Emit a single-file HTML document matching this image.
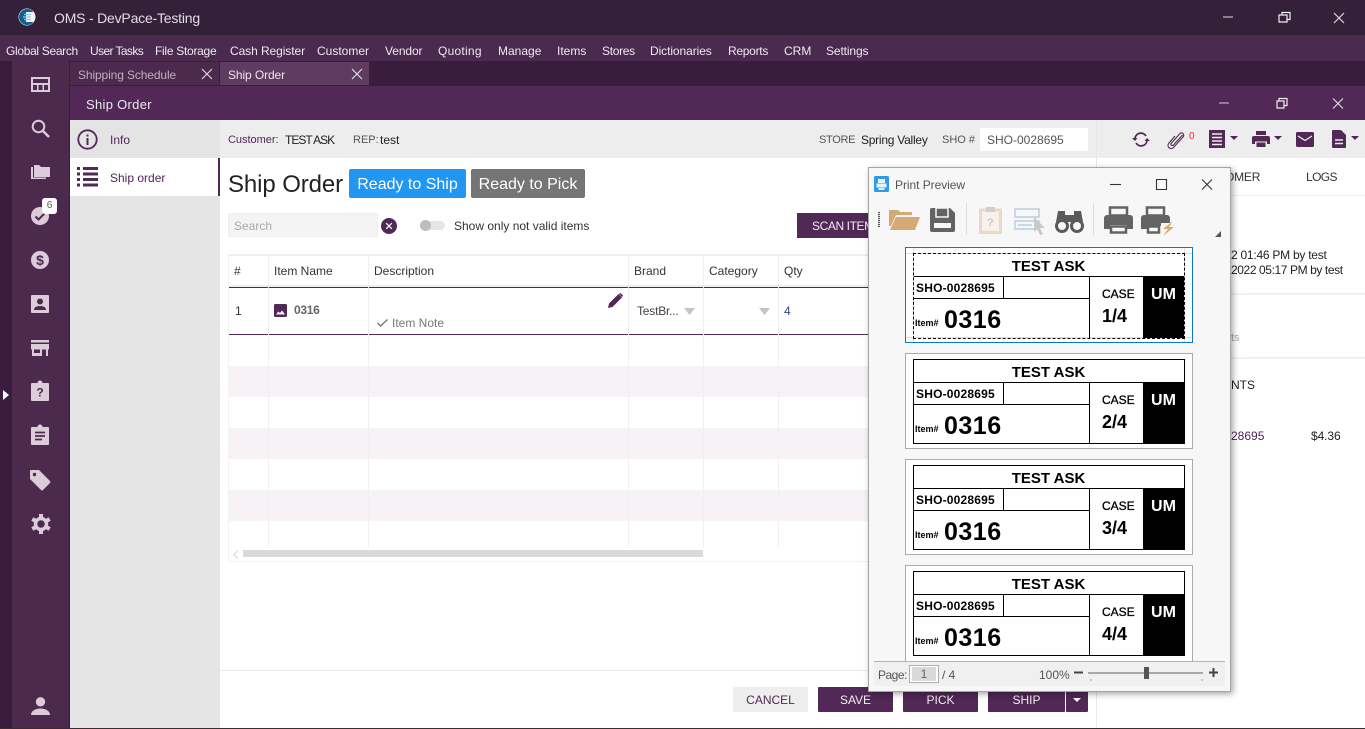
<!DOCTYPE html>
<html><head><meta charset="utf-8"><style>
html,body{margin:0;padding:0;width:1365px;height:729px;overflow:hidden;background:#fff}
body{font-family:"Liberation Sans",sans-serif;font-size:12px;color:#222;position:relative}
.b,.t{position:absolute}
.t{white-space:nowrap;line-height:16px}
svg{position:absolute;overflow:visible}
.m{top:43px;color:#f1e9f2;font-size:12px}
.th{top:263px;color:#333;font-size:12px}
.vl{position:absolute;top:255px;height:292px;width:1px;background:#f1eff2}
.ic{fill:#dccbd9}
.btn{position:absolute;top:687px;height:25px;background:#512856;color:#f3edf4;text-align:center;line-height:27px;font-size:12px;border-radius:1px}
.card{position:absolute;left:905px;width:288px;background:#fff;border:1px solid #ababab;box-sizing:border-box;height:96px}
.lb{position:absolute;left:7px;top:5px;width:272px;height:85px;border:1px solid #000;box-sizing:border-box;color:#000;font-weight:bold}
.lb div{position:absolute;white-space:nowrap}
.ln{background:#000}
</style></head><body>

<!-- title bar -->
<div class="b" style="left:0;top:0;width:1365px;height:35px;background:#35203a"></div>
<div class="b" style="left:0;top:35px;width:1365px;height:26px;background:#4a2a4e"></div>
<div class="b" style="left:0;top:61px;width:1365px;height:25px;background:#3a1c3e"></div>
<svg style="left:18px;top:8px" width="18" height="18" viewBox="0 0 18 18"><circle cx="9" cy="9" r="8.500" fill="#f4f4f4"/><path d="M9 1A8 8 0 0 0 9 17c3 0 5-1 6-3H8V4h7C14 2 12 1 9 1Z" fill="#0f5f97"/><path d="M6 6.500h7M5 9h8M6 11.500h7" stroke="#8fc3e4" stroke-width="1.200"/></svg>
<div class="t" style="left:54px;top:10px;color:#e3dbe5;font-size:14px;letter-spacing:-.2px">OMS - DevPace-Testing</div>
<svg style="left:1223px;top:10px" width="130" height="16" fill="none" stroke="#cfc8d1"><path d="M0 7h10" stroke="#a89fac" stroke-width="1.500"/><path d="M56 5h8v7h-8zM59 5V2.500h8v7h-3" stroke="#eee" stroke-width="1.200"/><path d="M111 3l10 10M121 3l-10 10" stroke="#ddd" stroke-width="1.200"/></svg>

<!-- menu -->
<div class="t m" style="left:6px;letter-spacing:-.32px">Global Search</div>
<div class="t m" style="left:90px;letter-spacing:-.6px">User Tasks</div>
<div class="t m" style="left:155px;letter-spacing:-.28px">File Storage</div>
<div class="t m" style="left:230px;letter-spacing:-.08px">Cash Register</div>
<div class="t m" style="left:317px">Customer</div>
<div class="t m" style="left:385px;letter-spacing:-.1px">Vendor</div>
<div class="t m" style="left:438px;letter-spacing:.25px">Quoting</div>
<div class="t m" style="left:498px">Manage</div>
<div class="t m" style="left:557px">Items</div>
<div class="t m" style="left:602px;letter-spacing:-.3px">Stores</div>
<div class="t m" style="left:650px;letter-spacing:-.08px">Dictionaries</div>
<div class="t m" style="left:728px;letter-spacing:-.28px">Reports</div>
<div class="t m" style="left:784px">CRM</div>
<div class="t m" style="left:826px;letter-spacing:-.12px">Settings</div>

<!-- sidebars -->
<div class="b" style="left:0;top:61px;width:12px;height:667px;background:#3a1c3e"></div>
<div class="b" style="left:12px;top:61px;width:58px;height:667px;background:#4b2a4d"></div>
<div class="b" style="left:69px;top:61px;width:1px;height:667px;background:#3a1c3e"></div>
<svg style="left:3px;top:390px" width="6" height="10"><path d="M0 0l6 5-6 5z" fill="#fff"/></svg>

<svg style="left:31px;top:77px" width="19" height="15"><path d="M0 0h19v15H0zM2 2v4h15V2zM2 8v5h4V8zM7.500 8v5h4V8zM13 8v5h4V8z" class="ic" fill-rule="evenodd"/></svg>
<svg style="left:31px;top:119px" width="19" height="19" fill="none" stroke="#dccbd9" stroke-width="2"><circle cx="7.500" cy="7.500" r="5.800"/><path d="M12 12l6 6" stroke-width="2.400"/></svg>
<svg style="left:31px;top:165px" width="19" height="14"><path d="M0 2v12h15v-1.500H2V2z" class="ic"/><path d="M3 0h5l2 2h9v10H3z" class="ic"/></svg>
<svg style="left:31px;top:207px" width="18" height="18"><circle cx="9" cy="9" r="9" class="ic"/><path d="M4.500 9.500l3 3 6-6" fill="none" stroke="#4b2a4d" stroke-width="2"/></svg>
<div class="b" style="left:42px;top:198px;width:15px;height:16px;background:#fff;border-radius:3px;color:#555;font-size:10px;text-align:center;line-height:16px">6</div>
<svg style="left:31px;top:251px" width="18" height="18"><circle cx="9" cy="9" r="9" class="ic"/><text x="9" y="14" text-anchor="middle" font-family="Liberation Sans" font-size="14" font-weight="bold" fill="#4b2a4d">$</text></svg>
<svg style="left:31px;top:295px" width="18" height="18"><path d="M1 0h16a1 1 0 0 1 1 1v16a1 1 0 0 1-1 1H1a1 1 0 0 1-1-1V1a1 1 0 0 1 1-1z" class="ic"/><circle cx="9" cy="6.500" r="3" fill="#4b2a4d"/><path d="M3 15c0-3 3-4 6-4s6 1 6 4z" fill="#4b2a4d"/></svg>
<svg style="left:31px;top:340px" width="18" height="17"><path d="M0 0h18v2.500H0zM0 4h18l.0 5.500H17V16h-2V9.500h-4V16H1V9.500H0zM3 9.500V13h6V9.500z" class="ic" fill-rule="evenodd"/></svg>
<svg style="left:31px;top:381px" width="18" height="20"><path d="M1 2h5.500a2.500 2.500 0 0 1 5 0H17a1 1 0 0 1 1 1v16a1 1 0 0 1-1 1H1a1 1 0 0 1-1-1V3a1 1 0 0 1 1-1z" class="ic"/><text x="9" y="15.500" text-anchor="middle" font-family="Liberation Sans" font-size="12" font-weight="bold" fill="#4b2a4d">?</text></svg>
<svg style="left:31px;top:425px" width="18" height="20"><path d="M1 2h5.500a2.500 2.500 0 0 1 5 0H17a1 1 0 0 1 1 1v16a1 1 0 0 1-1 1H1a1 1 0 0 1-1-1V3a1 1 0 0 1 1-1z" class="ic"/><path d="M4 7.500h10M4 11h10M4 14.500h7" stroke="#4b2a4d" stroke-width="1.700"/></svg>
<svg style="left:30px;top:470px" width="21" height="21"><path d="M1 0h8l11 11a1.500 1.500 0 0 1 0 2l-7 7a1.500 1.500 0 0 1-2 0L0 9V1a1 1 0 0 1 1-1z" class="ic"/><circle cx="4.500" cy="4.500" r="1.700" fill="#4b2a4d"/></svg>
<svg style="left:31px;top:514px" width="20" height="20" viewBox="0 0 20 20"><circle cx="10" cy="10" r="5.500" fill="none" stroke="#dccbd9" stroke-width="3.500"/><path d="M10 0v4M10 16v4M1.300 5l3.500 2M15.200 13l3.500 2M18.700 5l-3.500 2M4.800 13l-3.500 2" stroke="#dccbd9" stroke-width="4"/></svg>
<svg style="left:31px;top:697px" width="19" height="19"><circle cx="9.500" cy="4.800" r="4.700" class="ic"/><path d="M0 18c0-4.500 5-6.500 9.500-6.500S19 13.500 19 18z" class="ic"/></svg>

<!-- tabs -->
<div class="b" style="left:70px;top:62px;width:149px;height:23px;background:#4b2a4d"></div>
<div class="t" style="left:78px;top:67px;color:#bfb0c2;font-size:12px;letter-spacing:-.12px">Shipping Schedule</div>
<svg style="left:202px;top:69px" width="10" height="10"><path d="M0 0l10 10M10 0L0 10" stroke="#e3dbe5" stroke-width="1.100"/></svg>
<div class="b" style="left:220px;top:62px;width:149px;height:23px;background:#5e3c61"></div>
<div class="t" style="left:228px;top:67px;color:#eee6ef;font-size:12px;letter-spacing:-.1px">Ship Order</div>
<svg style="left:352px;top:69px" width="10" height="10"><path d="M0 0l10 10M10 0L0 10" stroke="#e9e3ea" stroke-width="1.100"/></svg>

<!-- ship order header -->
<div class="b" style="left:70px;top:86px;width:1295px;height:34px;background:#512856"></div>
<div class="t" style="left:86px;top:97px;color:#efe7f0;font-size:13px;letter-spacing:.3px">Ship Order</div>
<svg style="left:1219px;top:96px" width="130" height="16" fill="none"><path d="M0 7h10" stroke="#a994ad" stroke-width="1.500"/><path d="M58 5h7v7h-7zM60 5V2.500h8v7h-3" stroke="#eee" stroke-width="1.200"/><path d="M114 2.500l10 10M124 2.500l-10 10" stroke="#ddd" stroke-width="1.200"/></svg>

<!-- left panel -->
<div class="b" style="left:70px;top:120px;width:150px;height:608px;background:#e4e4e4"></div>
<div class="b" style="left:70px;top:158px;width:150px;height:38px;background:#fff"></div>
<div class="b" style="left:218px;top:158px;width:2px;height:38px;background:#512856"></div>
<svg style="left:77px;top:129px" width="21" height="21"><circle cx="10.500" cy="10.500" r="9.200" fill="none" stroke="#512856" stroke-width="1.800"/><path d="M9.500 9h2v7h-2zM9.500 5.500h2v2h-2z" fill="#512856"/></svg>
<svg style="left:77px;top:167px" width="21" height="20" fill="#512856"><path d="M0 0h3v3H0zM6 0h15v3H6zM0 5.500h3v3H0zM6 5.500h15v3H6zM0 11h3v3H0zM6 11h15v3H6zM0 16.500h3v3H0zM6 16.500h15v3H6z"/></svg>
<div class="t" style="left:110px;top:132px;color:#512856;font-size:12px">Info</div>
<div class="t" style="left:110px;top:170px;color:#512856;font-size:12px">Ship order</div>

<!-- info bar -->
<div class="b" style="left:220px;top:120px;width:877px;height:38px;background:#ededed"></div>
<div class="b" style="left:1097px;top:120px;width:268px;height:38px;background:#ededed"></div>
<div class="b" style="left:1096px;top:120px;width:1px;height:608px;background:#e8e8e8"></div>
<div class="t" style="left:228px;top:132px;color:#512856;font-size:11px;letter-spacing:-.02px">Customer:</div>
<div class="t" style="left:285px;top:132px;color:#222;font-size:12px;letter-spacing:-1px">TEST ASK</div>
<div class="t" style="left:353px;top:132px;color:#555;font-size:11px">REP:</div>
<div class="t" style="left:380px;top:132px;color:#222;font-size:12px">test</div>
<div class="t" style="left:819px;top:132px;color:#555;font-size:11px;letter-spacing:-.3px">STORE</div>
<div class="t" style="left:861px;top:132px;color:#222;font-size:12px;letter-spacing:-.25px">Spring Valley</div>
<div class="t" style="left:942px;top:132px;color:#555;font-size:11px">SHO #</div>
<div class="b" style="left:980px;top:128px;width:108px;height:23px;background:#fff"></div>
<div class="t" style="left:987px;top:132px;color:#555;font-size:12px">SHO-0028695</div>

<!-- right icons -->
<svg style="left:1132px;top:131px" width="18" height="17" fill="none" stroke="#512856" stroke-width="1.700"><path d="M3 7a6 6 0 0 1 11-2M15 10a6 6 0 0 1-11 2"/><path d="M0 7h5.500L3 10zM18 10h-5.500L15 7z" fill="#512856" stroke="none"/></svg>
<svg style="left:1167px;top:131px" width="17" height="18" fill="none" stroke="#512856" stroke-width="1.100"><path d="M15.500 4L6.500 14c-1.500 1.500-3.500-.5-2-2l8.500-9.500c2-2 5 1 3 3.500L6.500 16.500c-3 3-7.500-1-4.500-4.500L8 5"/></svg>
<div class="t" style="left:1189px;top:130px;color:#f22;font-size:10px;line-height:14px">0</div>
<svg style="left:1209px;top:130px" width="16" height="18" fill="#512856"><path d="M0 0h16v18H0z"/><path d="M3 4h10M3 7.500h10M3 11h10M3 14.500h10" stroke="#ededed" stroke-width="1.500"/></svg>
<svg style="left:1230px;top:136px" width="8" height="4"><path d="M0 0h8L4 4z" fill="#512856"/></svg>
<svg style="left:1252px;top:131px" width="18" height="16" fill="#512856"><path d="M4 0h10v4H4zM2 5h14a2 2 0 0 1 2 2v6h-3v-2.500H3V13H0V7a2 2 0 0 1 2-2zM4.500 11.500h9V16h-9z"/></svg>
<svg style="left:1274px;top:136px" width="8" height="4"><path d="M0 0h8L4 4z" fill="#512856"/></svg>
<svg style="left:1296px;top:132px" width="18" height="15"><path d="M1.500 0h15A1.500 1.500 0 0 1 18 1.500v12a1.500 1.500 0 0 1-1.500 1.500h-15A1.500 1.500 0 0 1 0 13.500v-12A1.500 1.500 0 0 1 1.500 0z" fill="#512856"/><path d="M2 4l7 4.500L16 4" fill="none" stroke="#ededed" stroke-width="1.300"/></svg>
<svg style="left:1332px;top:130px" width="14" height="18"><path d="M1 0h8l5 5v12a1 1 0 0 1-1 1H1a1 1 0 0 1-1-1V1a1 1 0 0 1 1-1z" fill="#512856"/><path d="M3 10h8M3 13.500h8" stroke="#ededed" stroke-width="1.500"/></svg>
<svg style="left:1351px;top:136px" width="8" height="4"><path d="M0 0h8L4 4z" fill="#512856"/></svg>

<!-- right panel -->
<div class="t" style="left:1225px;top:169px;color:#333;font-size:12px;letter-spacing:-.2px">OMER</div>
<div class="t" style="left:1306px;top:169px;color:#333;font-size:12px;letter-spacing:-.6px">LOGS</div>
<div class="b" style="left:1097px;top:195px;width:268px;height:1px;background:#eee"></div>
<div class="t" style="left:1231px;top:247px;color:#222;font-size:12px;letter-spacing:-.25px">2 01:46 PM by test</div>
<div class="t" style="left:1231px;top:262px;color:#222;font-size:12px;letter-spacing:-.4px">2022 05:17 PM by test</div>
<div class="b" style="left:1097px;top:293px;width:268px;height:2px;background:#f0f0f0"></div>
<div class="t" style="left:1231px;top:330px;color:#aaa;font-size:11px">ts</div>
<div class="b" style="left:1097px;top:357px;width:268px;height:2px;background:#f0f0f0"></div>
<div class="t" style="left:1231px;top:377px;color:#222;font-size:12px">NTS</div>
<div class="t" style="left:1231px;top:428px;color:#512856;font-size:12px">28695</div>
<div class="t" style="left:1311px;top:428px;color:#222;font-size:12px;letter-spacing:-.1px">$4.36</div>

<!-- heading -->
<div class="t" style="left:228px;top:170px;font-size:24px;line-height:30px;color:#222;letter-spacing:-.1px">Ship Order</div>
<div class="b" style="left:349px;top:169px;width:117px;height:29px;background:#2196f3;border-radius:2px;color:#fff;font-size:16px;line-height:31px;text-align:center">Ready to Ship</div>
<div class="b" style="left:471px;top:169px;width:114px;height:29px;background:#757575;border-radius:2px;color:#fff;font-size:16px;line-height:31px;text-align:center">Ready to Pick</div>

<!-- search -->
<div class="b" style="left:228px;top:213px;width:150px;height:24px;background:#f4f4f4;border:1px solid #eee;box-sizing:border-box;border-radius:2px"></div>
<div class="t" style="left:234px;top:218px;color:#a8a8a8;font-size:12px">Search</div>
<svg style="left:381px;top:218px" width="16" height="16"><circle cx="8" cy="8" r="8" fill="#512856"/><path d="M5.200 5.200l5.600 5.600M10.800 5.200l-5.600 5.600" stroke="#fff" stroke-width="1.300"/></svg>
<div class="b" style="left:421px;top:221px;width:24px;height:9px;background:#e6e6e6;border-radius:5px"></div>
<div class="b" style="left:420px;top:220px;width:11px;height:11px;background:#bdbdbd;border-radius:50%"></div>
<div class="t" style="left:454px;top:218px;color:#333;font-size:12px">Show only not valid items</div>
<div class="b" style="left:797px;top:213px;width:80px;height:25px;background:#512856"></div>
<div class="t" style="left:812px;top:218px;color:#f3edf4;font-size:12px;letter-spacing:-.4px">SCAN ITEM</div>

<!-- grid -->
<div class="b" style="left:228px;top:254px;width:640px;height:2px;background:#eee"></div>
<div class="b" style="left:228px;top:285px;width:640px;height:2px;background:#eee"></div>
<div class="b" style="left:229px;top:287px;width:639px;height:1px;background:#512856"></div>
<div class="b" style="left:229px;top:334px;width:639px;height:1px;background:#512856"></div>
<div class="b" style="left:229px;top:366px;width:639px;height:31px;background:#f6f2f6"></div>
<div class="b" style="left:229px;top:428px;width:639px;height:31px;background:#f6f2f6"></div>
<div class="b" style="left:229px;top:490px;width:639px;height:31px;background:#f6f2f6"></div>
<div class="vl" style="left:268px"></div>
<div class="vl" style="left:368px"></div>
<div class="vl" style="left:628px"></div>
<div class="vl" style="left:703px"></div>
<div class="vl" style="left:778px"></div>
<div class="b" style="left:228px;top:254px;width:1px;height:308px;background:#f2f2f2"></div>
<div class="b" style="left:228px;top:561px;width:640px;height:1px;background:#f2f2f2"></div>
<div class="t th" style="left:234px">#</div>
<div class="t th" style="left:274px">Item Name</div>
<div class="t th" style="left:374px">Description</div>
<div class="t th" style="left:634px">Brand</div>
<div class="t th" style="left:709px">Category</div>
<div class="t th" style="left:784px">Qty</div>
<div class="t" style="left:235px;top:303px;color:#333">1</div>
<svg style="left:274px;top:304px" width="13" height="13"><rect width="13" height="13" rx="1.500" fill="#512856"/><path d="M2 10.500l2.500-3 1.500 1.500 2-2.500 3 4z" fill="#fff"/></svg>
<div class="t" style="left:294px;top:302px;color:#666;font-weight:bold;font-size:12px;letter-spacing:-.3px">0316</div>
<svg style="left:377px;top:319px" width="11" height="8"><path d="M.5 4l3 3 7-6.500" fill="none" stroke="#777" stroke-width="1.400"/></svg>
<div class="t" style="left:392px;top:315px;color:#777;font-size:12px">Item Note</div>
<svg style="left:608px;top:293px" width="15" height="15"><path d="M0 15l1-4.500L10.500 1l3.500 3.500L4.500 14zM11.500 .5l1-.5 2.500 2.500-.5 1-.5.500L11 1z" fill="#512856"/></svg>
<div class="t" style="left:637px;top:303px;color:#444;font-size:12px;letter-spacing:-.2px">TestBr...</div>
<svg style="left:684px;top:308px" width="11" height="7"><path d="M0 0h11L5.500 7z" fill="#c4c4c4"/></svg>
<svg style="left:759px;top:308px" width="11" height="7"><path d="M0 0h11L5.500 7z" fill="#c4c4c4"/></svg>
<div class="t" style="left:784px;top:303px;color:#2e4a7d;font-size:12px">4</div>
<svg style="left:233px;top:550px" width="6" height="9"><path d="M5 .5L1 4.500l4 4" fill="none" stroke="#ddd" stroke-width="1.300"/></svg>
<div class="b" style="left:243px;top:550px;width:460px;height:7px;background:#d9d9d9"></div>

<!-- footer -->
<div class="b" style="left:220px;top:670px;width:876px;height:1px;background:#e6e6e6"></div>
<div class="b" style="left:733px;top:687px;width:75px;height:25px;background:#eee;color:#512856;text-align:center;line-height:27px;font-size:12px">CANCEL</div>
<div class="btn" style="left:818px;width:75px">SAVE</div>
<div class="btn" style="left:903px;width:75px">PICK</div>
<div class="btn" style="left:988px;width:77px">SHIP</div>
<div class="btn" style="left:1066px;width:22px"></div>
<svg style="left:1073px;top:698px" width="8" height="4"><path d="M0 0h8L4 4z" fill="#fff"/></svg>
<div class="b" style="left:0;top:728px;width:1365px;height:1px;background:#3c2b32"></div>

<!-- print preview -->
<div class="b" style="left:868px;top:167px;width:363px;height:525px;background:#f7f7f7;border:1px solid #a5a5a5;box-sizing:border-box;box-shadow:2px 2px 6px rgba(0,0,0,.35)"></div>
<svg style="left:874px;top:176px" width="15" height="16"><rect width="15" height="16" rx="1.500" fill="#2f9be8"/><path d="M4 3h7v4H4zM2.500 7.500h10v4h-10zM4.500 12h6v2h-6z" fill="#e6f3fc"/></svg>
<div class="t" style="left:895px;top:177px;color:#555;font-size:12px;letter-spacing:-.05px">Print Preview</div>
<svg style="left:1110px;top:177px" width="108" height="14" fill="none" stroke="#333" stroke-width="1.100"><path d="M0 7.500h11"/><path d="M46.500 2.500h10v10h-10z"/><path d="M92 2.500l10 10M102 2.500l-10 10"/></svg>

<!-- toolbar -->
<div class="b" style="left:878px;top:212px;width:2px;height:15px;background:repeating-linear-gradient(#555 0 1px,#ddd 1px 2px)"></div>
<svg style="left:889px;top:208px" width="31" height="24"><path d="M0 2h9l2 2h12v3H7L2 18H0z" fill="#d4a976"/><path d="M7 9h24l-5 13H1z" fill="#d4a976"/></svg>
<svg style="left:930px;top:208px" width="25" height="24"><path d="M2 0h18l5 5v17a2 2 0 0 1-2 2H2a2 2 0 0 1-2-2V2a2 2 0 0 1 2-2z" fill="#636363"/><path d="M6 0h12v9H6z" fill="#636363" stroke="#f7f7f7" stroke-width="1.500"/><path d="M4 15h17v5H4z" fill="#f7f7f7"/></svg>
<div class="b" style="left:966px;top:203px;width:1px;height:32px;background:#ddd"></div>
<svg style="left:979px;top:206px" width="23" height="28"><rect x="1.500" y="4" width="20" height="22.500" fill="#f7f1ea" stroke="#ead9c8" stroke-width="3"/><rect x="7" y="1" width="9" height="5" fill="#cfcfcf"/><text x="11.500" y="20" text-anchor="middle" font-family="Liberation Sans" font-size="11" font-weight="bold" fill="#c8c8c8">?</text></svg>
<svg style="left:1014px;top:208px" width="32" height="27" fill="none"><path d="M1 1h24v8H1zM1 13h24v8H1z" stroke="#bccde0" stroke-width="1.500"/><path d="M4 17h14" stroke="#bccde0" stroke-width="1.500"/><path d="M20 9l11 11-5 0 3 6-3 1-3-6-3 3z" fill="#c9c9c9"/></svg>
<svg style="left:1055px;top:208px" width="29" height="25"><circle cx="7" cy="18" r="5.500" fill="none" stroke="#5a5a5a" stroke-width="3"/><circle cx="22" cy="18" r="5.500" fill="none" stroke="#5a5a5a" stroke-width="3"/><path d="M3 3h7v11H1zM19 3h7l2 11h-9zM10 7h9v7h-9z" fill="#5a5a5a"/></svg>
<div class="b" style="left:1093px;top:203px;width:1px;height:32px;background:#ddd"></div>
<svg style="left:1104px;top:206px" width="29" height="28"><path d="M6 1.500h17v8H6z" fill="none" stroke="#636363" stroke-width="2.500"/><path d="M3 9h23a3 3 0 0 1 3 3v11h-6v-4H6v4H0V12a3 3 0 0 1 3-3z" fill="#636363"/><path d="M7 20.500h15v6H7z" fill="#f7f7f7" stroke="#636363" stroke-width="2.500"/></svg>
<svg style="left:1141px;top:206px" width="33" height="30"><path d="M6 1.500h17v8H6z" fill="none" stroke="#636363" stroke-width="2.500"/><path d="M3 9h23a3 3 0 0 1 3 3v5H20v3H6v3H0V12a3 3 0 0 1 3-3z" fill="#636363"/><path d="M7 20.500h11v6H7z" fill="#f7f7f7" stroke="#636363" stroke-width="2.500"/><path d="M32 15l-10 8h5l-5 7 11-9h-5z" fill="#dca866"/></svg>
<svg style="left:1214px;top:230px" width="8" height="8"><path d="M7 1v6H1z" fill="#555"/></svg>

<!-- label 1 -->
<div class="card" style="top:247px;border-color:#0a78c8">
 <div class="b" style="left:0;top:5px;width:286px;height:1px;background:#ddd"></div>
 <div class="b" style="left:0;top:89px;width:286px;height:1px;background:#ddd"></div>
 <div class="b" style="left:7px;top:0;width:1px;height:94px;background:#ddd"></div>
 <div class="b" style="left:278px;top:0;width:1px;height:94px;background:#ddd"></div>
 <div class="lb" style="border-style:dashed;border-color:#000;height:86px">
  <div style="left:0;right:0;top:3px;text-align:center;font-size:15px;line-height:19px;padding-right:1px">TEST ASK</div>
  <div class="ln" style="left:0;top:22px;width:270px;height:1px"></div>
  <div class="ln" style="left:0;top:44px;width:175px;height:1px"></div>
  <div class="ln" style="left:89px;top:22px;width:1px;height:22px"></div>
  <div class="ln" style="left:175px;top:22px;width:1px;height:62px"></div>
  <div class="ln" style="left:229px;top:22px;width:41px;height:62px"></div>
  <div style="left:2px;top:26px;font-size:12px;line-height:16px;letter-spacing:.2px">SHO-0028695</div>
  <div style="left:1px;top:63px;font-size:9px;line-height:12px">Item#</div>
  <div style="left:30px;top:51px;font-size:25px;line-height:30px;letter-spacing:.5px">0316</div>
  <div style="left:188px;top:32px;font-size:12px;line-height:16px;font-weight:normal;-webkit-text-stroke:.3px #000">CASE</div>
  <div style="left:188px;top:52px;font-size:18px;line-height:20px">1/4</div>
  <div style="left:229px;top:32px;width:41px;text-align:center;color:#fff;font-size:16px;line-height:18px">UM</div>
 </div>
</div>
<!-- label 2 -->
<div class="card" style="top:353px">
 <div class="lb">
  <div style="left:0;right:0;top:3px;text-align:center;font-size:15px;line-height:19px;padding-right:1px">TEST ASK</div>
  <div class="ln" style="left:0;top:22px;width:270px;height:1px"></div>
  <div class="ln" style="left:0;top:44px;width:175px;height:1px"></div>
  <div class="ln" style="left:89px;top:22px;width:1px;height:22px"></div>
  <div class="ln" style="left:175px;top:22px;width:1px;height:62px"></div>
  <div class="ln" style="left:229px;top:22px;width:41px;height:62px"></div>
  <div style="left:2px;top:26px;font-size:12px;line-height:16px;letter-spacing:.2px">SHO-0028695</div>
  <div style="left:1px;top:63px;font-size:9px;line-height:12px">Item#</div>
  <div style="left:30px;top:51px;font-size:25px;line-height:30px;letter-spacing:.5px">0316</div>
  <div style="left:188px;top:32px;font-size:12px;line-height:16px;font-weight:normal;-webkit-text-stroke:.3px #000">CASE</div>
  <div style="left:188px;top:52px;font-size:18px;line-height:20px">2/4</div>
  <div style="left:229px;top:32px;width:41px;text-align:center;color:#fff;font-size:16px;line-height:18px">UM</div>
 </div>
</div>
<!-- label 3 -->
<div class="card" style="top:459px">
 <div class="lb">
  <div style="left:0;right:0;top:3px;text-align:center;font-size:15px;line-height:19px;padding-right:1px">TEST ASK</div>
  <div class="ln" style="left:0;top:22px;width:270px;height:1px"></div>
  <div class="ln" style="left:0;top:44px;width:175px;height:1px"></div>
  <div class="ln" style="left:89px;top:22px;width:1px;height:22px"></div>
  <div class="ln" style="left:175px;top:22px;width:1px;height:62px"></div>
  <div class="ln" style="left:229px;top:22px;width:41px;height:62px"></div>
  <div style="left:2px;top:26px;font-size:12px;line-height:16px;letter-spacing:.2px">SHO-0028695</div>
  <div style="left:1px;top:63px;font-size:9px;line-height:12px">Item#</div>
  <div style="left:30px;top:51px;font-size:25px;line-height:30px;letter-spacing:.5px">0316</div>
  <div style="left:188px;top:32px;font-size:12px;line-height:16px;font-weight:normal;-webkit-text-stroke:.3px #000">CASE</div>
  <div style="left:188px;top:52px;font-size:18px;line-height:20px">3/4</div>
  <div style="left:229px;top:32px;width:41px;text-align:center;color:#fff;font-size:16px;line-height:18px">UM</div>
 </div>
</div>
<!-- label 4 -->
<div class="card" style="top:565px;height:96px;border-bottom:0">
 <div class="lb">
  <div style="left:0;right:0;top:3px;text-align:center;font-size:15px;line-height:19px;padding-right:1px">TEST ASK</div>
  <div class="ln" style="left:0;top:22px;width:270px;height:1px"></div>
  <div class="ln" style="left:0;top:44px;width:175px;height:1px"></div>
  <div class="ln" style="left:89px;top:22px;width:1px;height:22px"></div>
  <div class="ln" style="left:175px;top:22px;width:1px;height:62px"></div>
  <div class="ln" style="left:229px;top:22px;width:41px;height:62px"></div>
  <div style="left:2px;top:26px;font-size:12px;line-height:16px;letter-spacing:.2px">SHO-0028695</div>
  <div style="left:1px;top:63px;font-size:9px;line-height:12px">Item#</div>
  <div style="left:30px;top:51px;font-size:25px;line-height:30px;letter-spacing:.5px">0316</div>
  <div style="left:188px;top:32px;font-size:12px;line-height:16px;font-weight:normal;-webkit-text-stroke:.3px #000">CASE</div>
  <div style="left:188px;top:52px;font-size:18px;line-height:20px">4/4</div>
  <div style="left:229px;top:32px;width:41px;text-align:center;color:#fff;font-size:16px;line-height:18px">UM</div>
 </div>
</div>

<!-- status bar -->
<div class="b" style="left:874px;top:661px;width:351px;height:25px;background:#f0f0f0;border-top:1px solid #b4b4b4;box-sizing:border-box"></div>
<div class="t" style="left:878px;top:667px;color:#555;font-size:12px;letter-spacing:-.5px">Page:</div>
<div class="b" style="left:909px;top:665px;width:30px;height:18px;background:#fff;border:1px solid #adadad;box-sizing:border-box"></div>
<div class="b" style="left:912px;top:667px;width:24px;height:14px;background:#d9d9d9;color:#666;text-align:center;line-height:14px;font-size:12px">1</div>
<div class="t" style="left:942px;top:667px;color:#555;font-size:12px">/ 4</div>
<div class="t" style="left:1039px;top:667px;color:#555;font-size:12px">100%</div>
<svg style="left:1074px;top:666px" width="146" height="16"><path d="M0 6.500h9" stroke="#444" stroke-width="2"/><path d="M14 7h115" stroke="#a8a8a8" stroke-width="2"/><rect x="70" y="1" width="5" height="12" fill="#555"/><path d="M17 13v2M128 13v2" stroke="#aaa"/><path d="M135 6.500h9M139.500 2v9" stroke="#444" stroke-width="2"/></svg>
</body></html>
